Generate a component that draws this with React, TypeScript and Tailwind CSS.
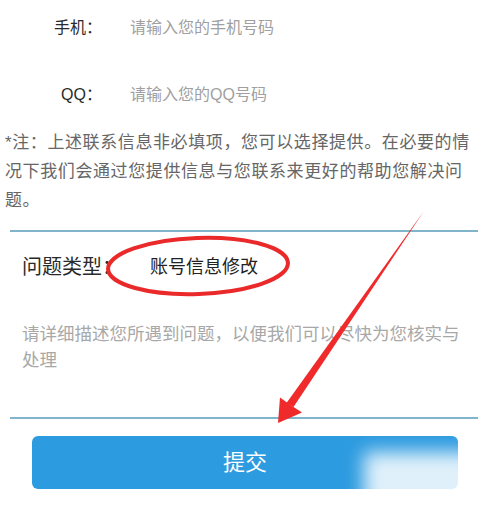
export default function App() {
  return (
    <div className="relative w-[488px] h-[519px] overflow-hidden bg-white font-['Liberation_Sans','Noto_Sans_CJK_SC',sans-serif]">
      {/* contact rows */}
      <div className="pt-2">
        <div className="flex h-10 items-center text-[16px]">
          <span className="w-[102px] text-right text-[#2a2a2a]">手机：</span>
          <span className="ml-7 text-[#a0a0a0]">请输入您的手机号码</span>
        </div>
        <div className="mt-[27px] flex h-10 items-center text-[16px]">
          <span className="w-[102px] text-right text-[#2a2a2a]">QQ：</span>
          <span className="ml-7 text-[#a0a0a0]">请输入您的QQ号码</span>
        </div>
      </div>

      <p className="mt-[13px] whitespace-nowrap pl-[5px] text-[17px] leading-[29px] tracking-[0.6px] text-[#666]">
        *注：上述联系信息非必填项，您可以选择提供。在必要的情
        <br />
        况下我们会通过您提供信息与您联系来更好的帮助您解决问
        <br />
        题。
      </p>

      <div className="mx-[10px] mt-[15px] h-[2px] bg-[#80b4ca]" />

      <div className="flex h-[70px] items-center pl-[22px]">
        <span className="text-[20px] text-[#2a2a2a]">问题类型：</span>
        <span className="ml-[28px] text-[18px] text-[#222]">账号信息修改</span>
      </div>

      <p className="mt-[19px] pl-[22px] pr-4 text-[17.5px] leading-[26px] text-[#a8a8a8]">
        请详细描述您所遇到问题，以便我们可以尽快为您核实与处理
      </p>

      <div className="mx-[10px] mt-[44px] h-[2px] bg-[#80b4ca]" />

      <button className="ml-[32px] mt-[17px] flex h-[53px] w-[426px] items-center justify-center rounded-md bg-[#2d9be0] text-[22px] text-white">
        提交
      </button>

      {/* watermark blur */}
      <div className="absolute left-[364px] top-[452px] h-[90px] w-[140px] bg-white/85 blur-[9px]" />

      {/* annotations */}
      <svg className="pointer-events-none absolute inset-0" width="488" height="519" viewBox="0 0 488 519">
        <ellipse
          cx="198"
          cy="266"
          rx="90"
          ry="28"
          fill="none"
          stroke="#ea2a2a"
          strokeWidth="4"
          transform="rotate(-2 198 266)"
        />
        <polygon points="424,211 293.5,407 286.5,403" fill="#f02a2a" />
        <polygon points="278,423 280,397.5 290.5,405 302,412.5" fill="#f02a2a" />
      </svg>
    </div>
  );
}
